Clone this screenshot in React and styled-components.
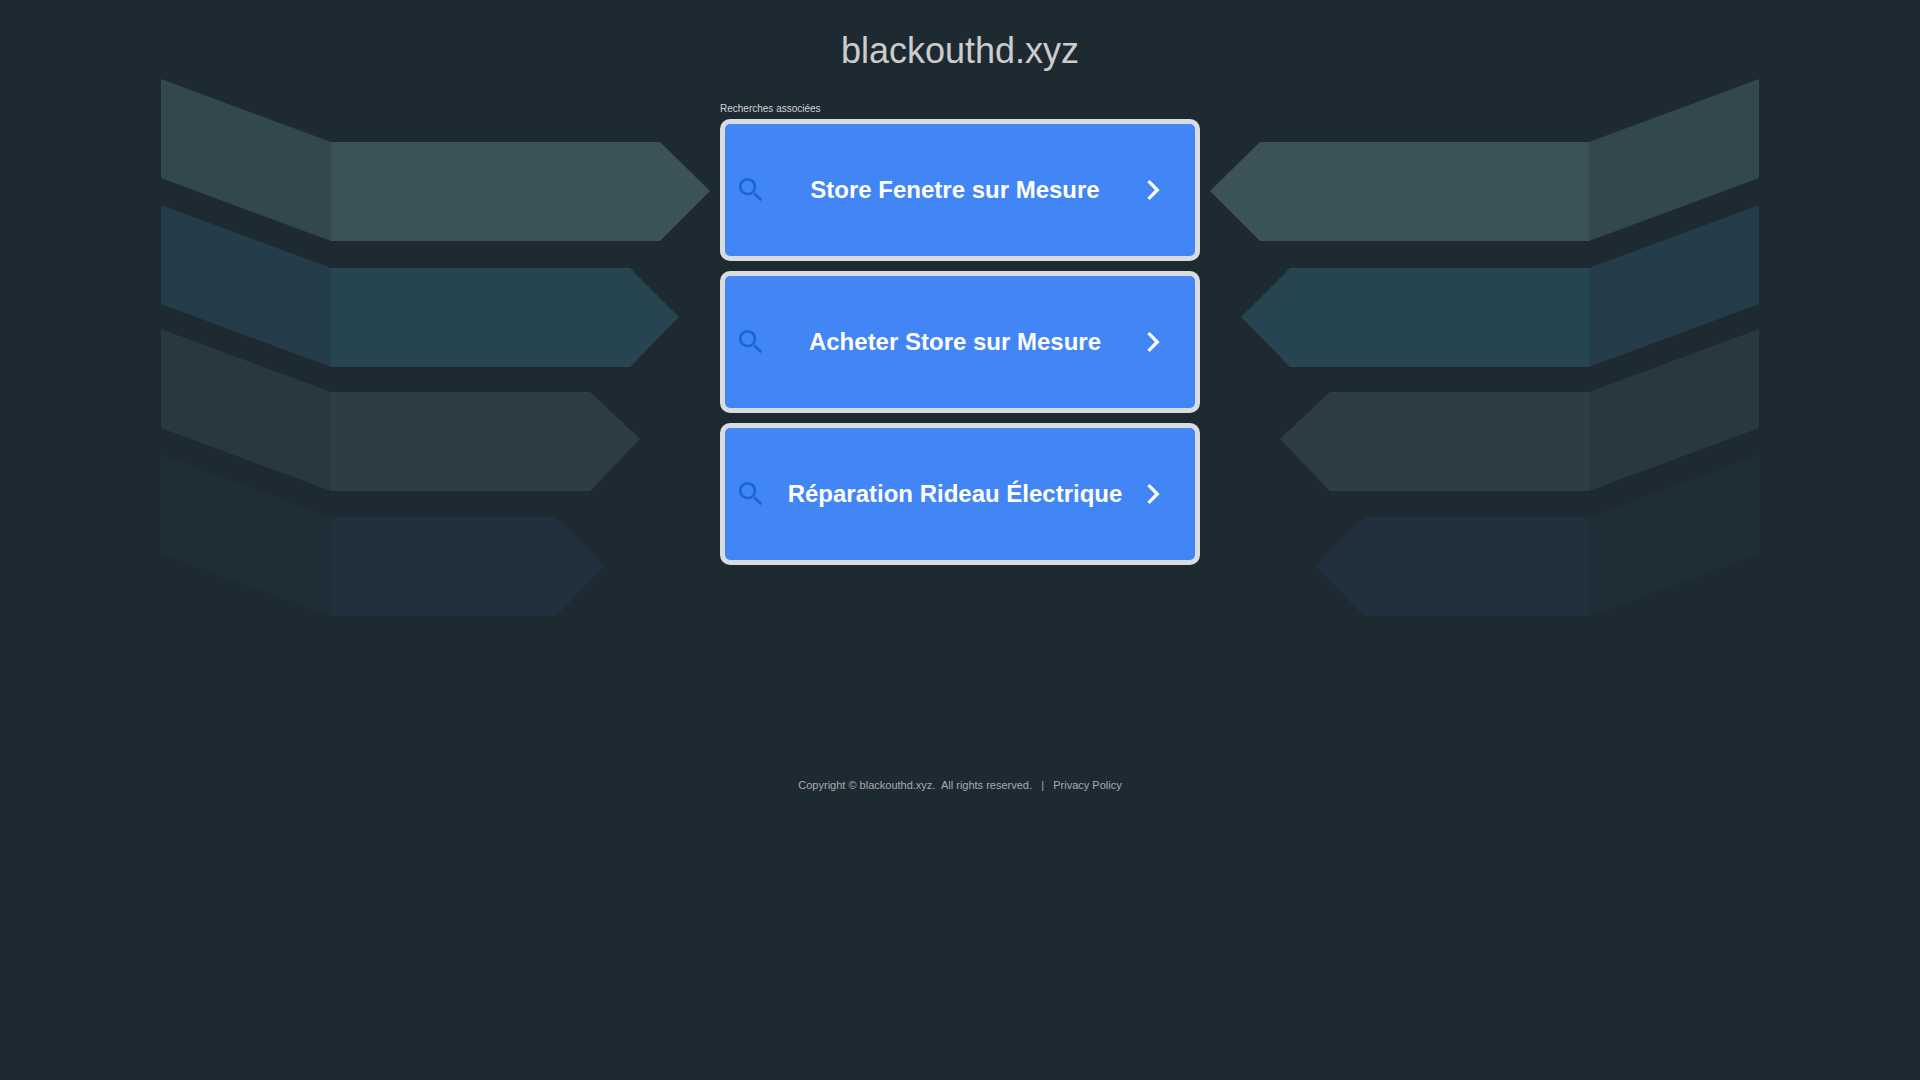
import React from "react";
import styled, { createGlobalStyle } from "styled-components";

const GlobalStyle = createGlobalStyle`
  *, *::before, *::after { box-sizing: border-box; }
  body {
    margin: 0;
    background: #1e2a32;
    font-family: "Liberation Sans", Arial, sans-serif;
  }
`;

const Page = styled.div`
  position: relative;
  display: flex;
  flex-direction: column;
  align-items: center;
  min-height: 100vh;
  overflow: hidden;
`;

const Backdrop = styled.svg`
  position: absolute;
  top: 0;
  left: 50%;
  width: 1600px;
  height: 620px;
  transform: translateX(-50%);
  pointer-events: none;
`;

const Header = styled.header`
  padding: 31px 16px 30px;
`;

const Title = styled.h1`
  margin: 0;
  font-size: 36px;
  font-weight: 400;
  line-height: 40px;
  color: #cccccc;
`;

const Main = styled.main`
  position: relative;
  width: 100%;
  max-width: 480px;
`;

const Label = styled.h2`
  margin: 0;
  padding-bottom: 2px;
  font-size: 10px;
  font-weight: 400;
  line-height: 16px;
  color: #d2d4d7;
`;

const Results = styled.nav`
  display: flex;
  flex-direction: column;
  gap: 10px;
`;

const Result = styled.a`
  display: flex;
  align-items: center;
  min-height: 142px;
  padding: 0 22px 0 10px;
  border: 5px solid #dadce0;
  border-radius: 10px;
  background: #4285f4;
  color: #ffffff;
  text-decoration: none;
`;

const ResultText = styled.span`
  flex: 1;
  margin-left: 10px;
  font-size: 24px;
  font-weight: 700;
  line-height: 28px;
  text-align: center;
`;

const Icon = styled.svg`
  flex: none;
  width: ${(p) => p.$size}px;
  height: ${(p) => p.$size}px;
  fill: ${(p) => p.$color};
`;

const Footer = styled.footer`
  position: relative;
  padding: 212px 16px 16px;
  font-size: 11px;
  line-height: 16px;
  color: #a9abae;
  white-space: pre-wrap;
`;

const PolicyLink = styled.a`
  color: inherit;
  text-decoration: none;
`;

const SEARCHES = [
  "Store Fenetre sur Mesure",
  "Acheter Store sur Mesure",
  "Réparation Rideau Électrique",
];

const RIBBONS = [
  { top: 79, fold: 142, neck: 500, tip: 550, tipY: 191, side: "#33484d", face: "#3b5357" },
  { top: 205, fold: 268, neck: 470, tip: 519, tipY: 317, side: "#253c4a", face: "#274551" },
  { top: 329, fold: 392, neck: 430, tip: 480, tipY: 439, side: "#27393f", face: "#2c3e44" },
  { top: 455, fold: 517, neck: 396, tip: 445, tipY: 566, side: "#1e2e37", face: "#20303c" },
];

const THICKNESS = 99;

function Ribbons() {
  return RIBBONS.map(({ top, fold, neck, tip, tipY, side, face }) => (
    <g key={top}>
      <polygon
        fill={side}
        points={`1,${top} 171,${fold} 171,${fold + THICKNESS} 1,${top + THICKNESS}`}
      />
      <polygon
        fill={face}
        points={`171,${fold} ${neck},${fold} ${tip},${tipY} ${neck},${fold + THICKNESS} 171,${fold + THICKNESS}`}
      />
    </g>
  ));
}

export default function App() {
  return (
    <Page>
      <GlobalStyle />
      <Backdrop viewBox="0 0 1600 620" aria-hidden="true">
        <Ribbons />
        <g transform="translate(1600 0) scale(-1 1)">
          <Ribbons />
        </g>
      </Backdrop>
      <Header>
        <Title>blackouthd.xyz</Title>
      </Header>
      <Main>
        <Label>Recherches associées</Label>
        <Results>
          {SEARCHES.map((text) => (
            <Result key={text} href="#">
              <Icon $size={32} $color="#1967d2" viewBox="0 0 24 24" aria-hidden="true">
                <path d="M15.5 14h-.79l-.28-.27C15.41 12.59 16 11.11 16 9.5 16 5.91 13.09 3 9.5 3S3 5.91 3 9.5 5.91 16 9.5 16c1.61 0 3.09-.59 4.23-1.57l.27.28v.79l5 4.99L20.49 19l-4.99-5zm-6 0C7.01 14 5 11.99 5 9.5S7.01 5 9.5 5 14 7.01 14 9.5 11.99 14 9.5 14z" />
              </Icon>
              <ResultText>{text}</ResultText>
              <Icon $size={40} $color="#ffffff" viewBox="0 0 24 24" aria-hidden="true">
                <path d="M10 6L8.59 7.41 13.17 12l-4.58 4.59L10 18l6-6z" />
              </Icon>
            </Result>
          ))}
        </Results>
      </Main>
      <Footer>
        {"Copyright © blackouthd.xyz.\u00a0 All rights reserved. \u00a0 | \u00a0 "}
        <PolicyLink href="#">Privacy Policy</PolicyLink>
      </Footer>
    </Page>
  );
}
